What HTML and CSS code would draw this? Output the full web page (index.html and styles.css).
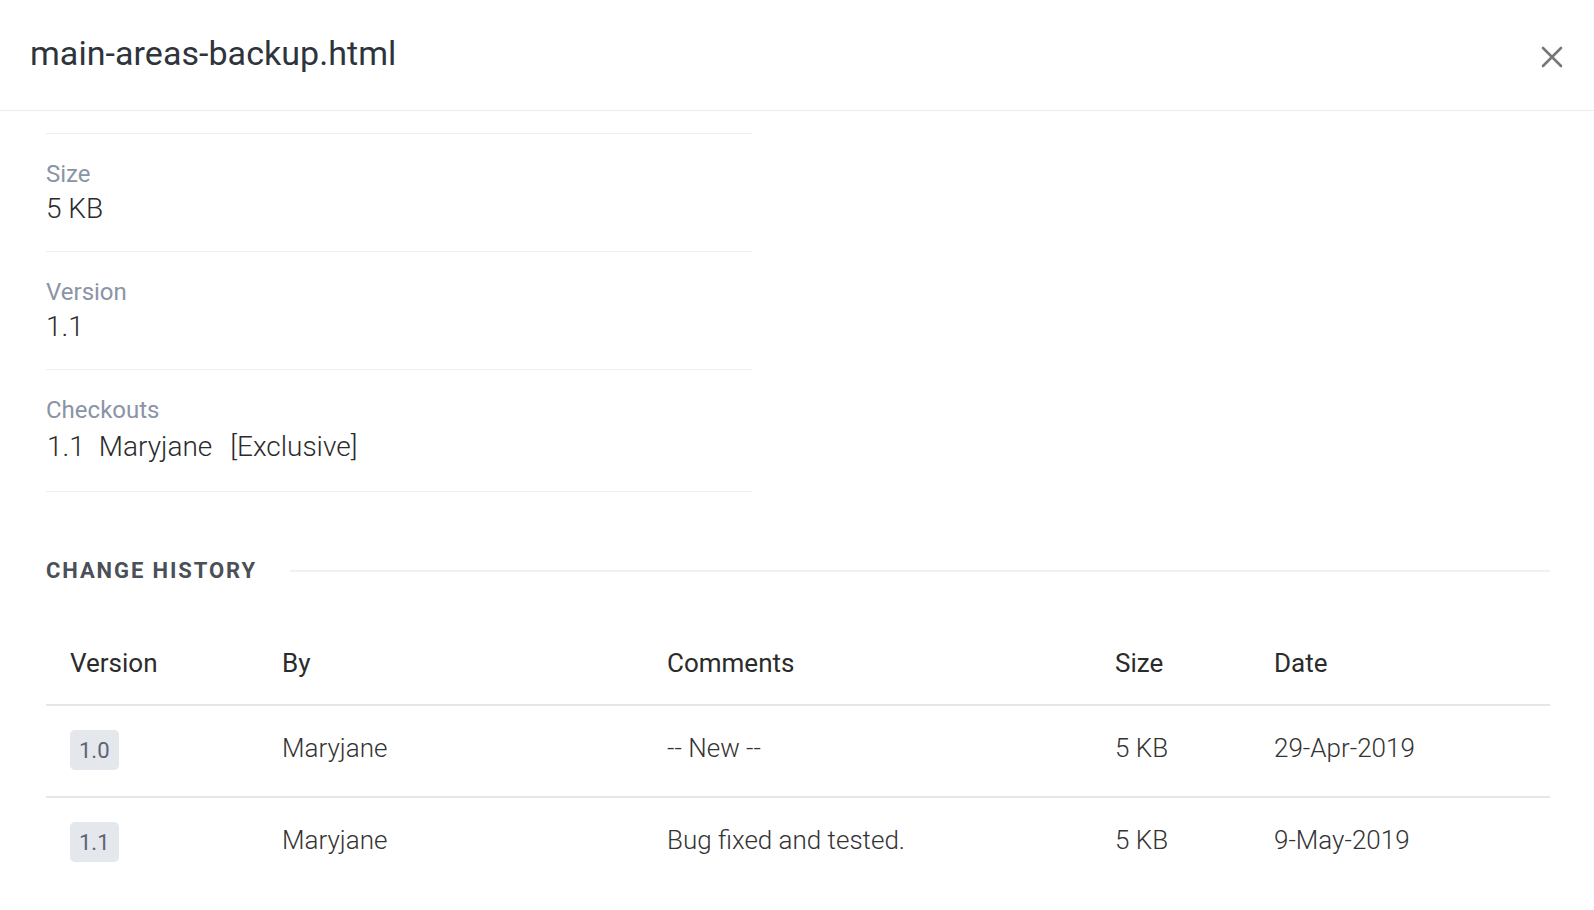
FILE: index.html
```html
<!DOCTYPE html>
<html>
<head>
<meta charset="utf-8">
<title>main-areas-backup.html</title>
<link rel="stylesheet" href="styles.css">
</head>
<body>
<div class="panel">
  <header class="header">
    <h1 class="title">main-areas-backup.html</h1>
    <button class="close" aria-label="Close">
      <svg width="22" height="22" viewBox="0 0 22 22"><path d="M2 2 L20 20 M20 2 L2 20" stroke="#777" stroke-width="2.6" stroke-linecap="round" fill="none"/></svg>
    </button>
  </header>

  <div class="content">
    <div class="props">
      <div class="prop prop-hidden"></div>
      <div class="prop">
        <div class="label">Size</div>
        <div class="value">5 KB</div>
      </div>
      <div class="prop">
        <div class="label">Version</div>
        <div class="value">1.1</div>
      </div>
      <div class="prop prop-last">
        <div class="label">Checkouts</div>
        <div class="value value-co"><span class="co-ver">1.1</span><span class="co-user">Maryjane</span><span>[Exclusive]</span></div>
      </div>
    </div>

    <div class="section-head">
      <h2 class="section-title">CHANGE HISTORY</h2>
      <div class="section-rule"></div>
    </div>

    <div class="history">
      <div class="hrow hhead">
        <div class="cell">Version</div>
        <div class="cell">By</div>
        <div class="cell">Comments</div>
        <div class="cell">Size</div>
        <div class="cell">Date</div>
      </div>
      <div class="hrow">
        <div class="cell"><span class="badge">1.0</span></div>
        <div class="cell">Maryjane</div>
        <div class="cell">-- New --</div>
        <div class="cell">5 KB</div>
        <div class="cell">29-Apr-2019</div>
      </div>
      <div class="hrow hrow-last">
        <div class="cell"><span class="badge">1.1</span></div>
        <div class="cell">Maryjane</div>
        <div class="cell">Bug fixed and tested.</div>
        <div class="cell">5 KB</div>
        <div class="cell">9-May-2019</div>
      </div>
    </div>
  </div>
</div>
</body>
</html>
```

FILE: styles.css
```css
* { box-sizing: border-box; }

html, body {
  margin: 0;
  padding: 0;
  background: #ffffff;
  font-family: Roboto, "Noto Sans", "Liberation Sans", sans-serif;
  color: #333333;
}

.panel {
  width: 1594px;
  height: 910px;
  overflow: hidden;
}

.header {
  height: 111px;
  border-bottom: 1px solid #ececec;
  display: flex;
  align-items: flex-start;
  justify-content: space-between;
  padding: 0 31px 0 30px;
}

.title {
  margin: 33px 0 0;
  font-size: 34px;
  line-height: 40px;
  font-weight: 400;
  color: #2e343c;
  letter-spacing: 0.05px;
}

.close {
  margin-top: 46px;
  padding: 0;
  border: 0;
  background: transparent;
  width: 22px;
  height: 22px;
  display: flex;
}

.content {
  padding: 0 44px 0 46px;
}

.props {
  width: 706px;
}

.prop {
  padding: 25px 0 22px;
  border-bottom: 1px solid #eeeff5;
}

.prop-hidden {
  padding: 0;
  height: 23px;
}

.prop-last {
  padding-bottom: 24px;
}

.label {
  font-size: 24px;
  line-height: 30px;
  color: #8a94a5;
  font-weight: 400;
}

.value {
  font-size: 28px;
  line-height: 40px;
  font-weight: 300;
  color: #2b2b2b;
}

.value-co {
  margin-top: 2px;
}

.co-ver {
  margin-left: 1px;
  margin-right: 14px;
}

.co-user {
  margin-right: 18px;
}

.section-head {
  display: flex;
  align-items: center;
  margin-top: 64px;
}

.section-title {
  margin: 0;
  font-size: 22px;
  line-height: 30px;
  font-weight: 700;
  letter-spacing: 1.9px;
  color: #4b5058;
}

.section-rule {
  flex: 1;
  height: 2px;
  background: #f0f0f0;
  margin-left: 33px;
}

.history {
  margin-top: 35px;
}

.hrow {
  display: grid;
  grid-template-columns: 212px 385px 448px 159px 1fr;
  height: 92px;
  padding-top: 24px;
  border-bottom: 2px solid #e4e6ea;
  font-size: 26px;
  line-height: 36px;
  font-weight: 300;
  color: #333333;
}

.hhead {
  height: 85px;
  padding-top: 24px;
  font-weight: 400;
  color: #2b2b2b;
}

.hrow-last {
  border-bottom: 0;
}

.cell {
  padding-left: 24px;
}

.badge {
  display: inline-block;
  height: 40px;
  padding: 0 9px;
  border-radius: 5px;
  background: #e4e7eb;
  color: #5b6473;
  font-size: 22px;
  line-height: 41px;
  font-weight: 400;
  vertical-align: top;
}
```
